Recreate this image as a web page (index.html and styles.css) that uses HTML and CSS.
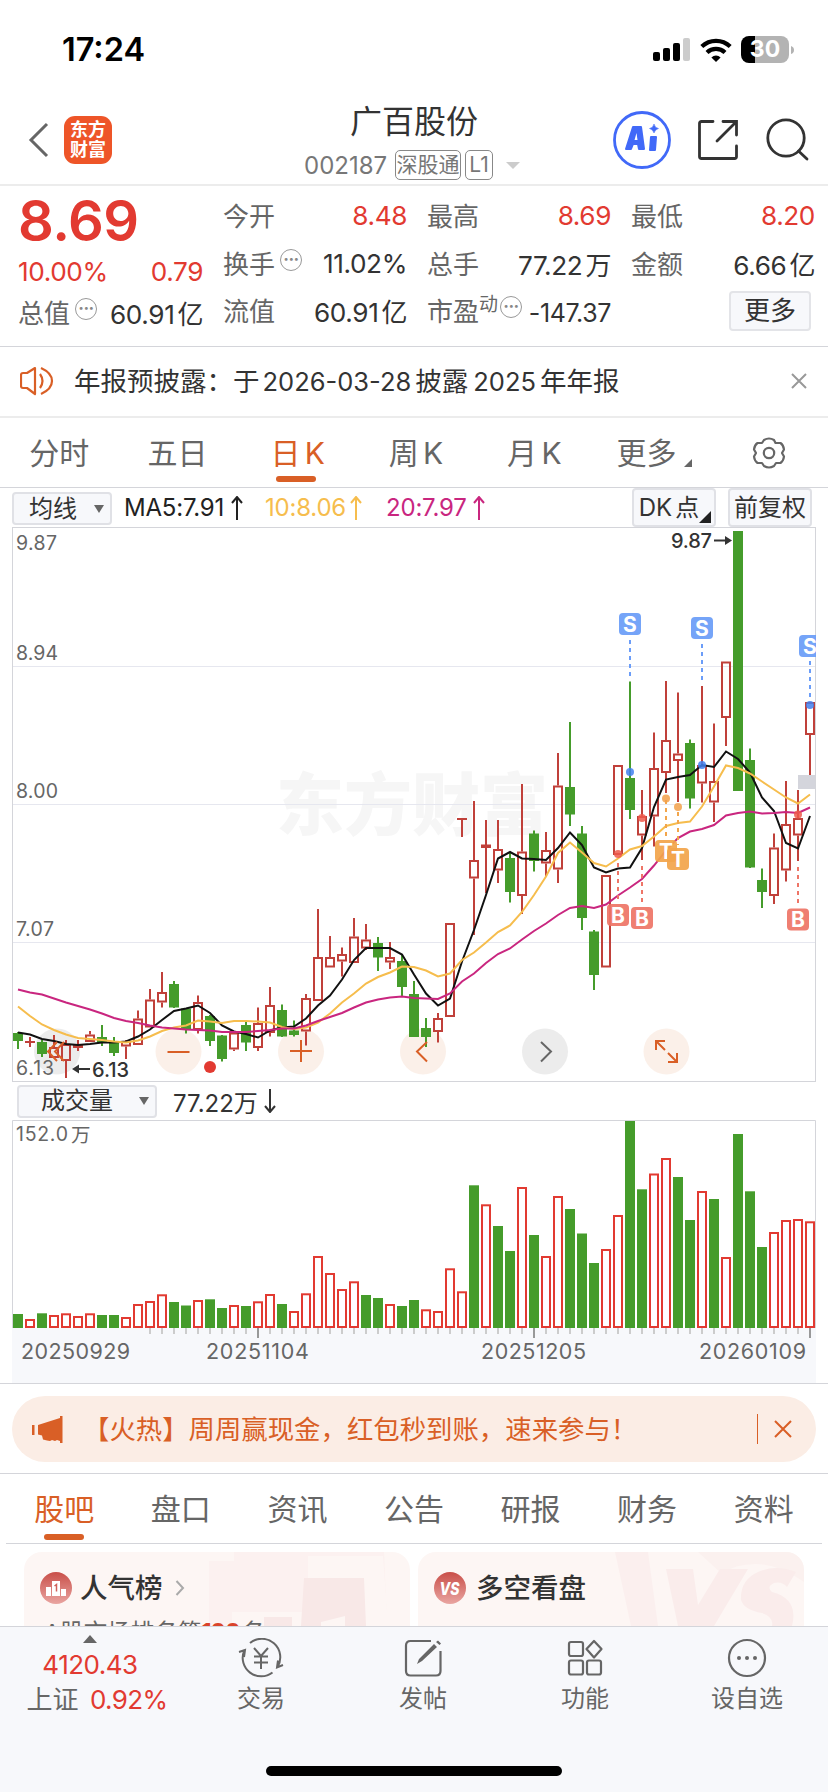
FILE: index.html
```
<!DOCTYPE html>
<html lang="zh-CN">
<head>
    <meta charset="UTF-8">
    <title>广百股份 002187</title>
    <link rel="stylesheet" href="styles.css">
</head>
<body>
    <!-- 状态栏 -->
    <div class="status">
        <span class="time">17:24</span>
        <div class="status-icons">
            <svg width="37" height="23" viewBox="0 0 37 23">
                <rect x="0" y="14" width="7" height="9" rx="2"/>
                <rect x="10" y="10" width="7" height="13" rx="2"/>
                <rect x="20" y="5" width="7" height="18" rx="2"/>
                <rect x="30" y="0" width="7" height="23" rx="2" fill="#ccc"/>
            </svg>
            <svg class="wifi" width="32" height="24" viewBox="0 0 32 24" fill="none" stroke="#000" stroke-width="4.2">
                <path d="M1.8 8.6a20.5 20.5 0 0 1 28.4 0"/>
                <path d="M7 14.4a13 13 0 0 1 18 0"/>
                <path d="M16 24l-4.6-4.6a6.8 6.8 0 0 1 9.2 0z" fill="#000" stroke="none"/>
            </svg>
            <div class="battery">30</div>
            <svg width="4" height="8" viewBox="0 0 4 8"><path d="M0 0q3 1 3 4t-3 4z" fill="#b3b3b3"/></svg>
        </div>
    </div>

    <!-- 标题 -->
    <header class="header">
        <svg class="back" width="22" height="36" viewBox="0 0 22 36"><path d="M19 2L3 18l16 16" fill="none" stroke="#666" stroke-width="3"/></svg>
        <div class="logo"><span>东方</span><span>财富</span></div>
        <div class="title">
            <div class="name">广百股份</div>
            <div class="code"><span class="num">002187</span><i class="tag">深股通</i><i class="tag tag-l1">L1</i><b class="tri"></b></div>
        </div>
        <div class="tools">
            <div class="ai">
                <svg width="58" height="58" viewBox="0 0 58 58">
                    <circle cx="29" cy="29" r="27.5" fill="none" stroke="#4169f8" stroke-width="2.8"/>
                    <g fill="#4169f8" stroke="#4169f8" stroke-linejoin="round">
                        <path d="M20 16h8l3 22h-5l-1-5h-5l-2 5h-5z" stroke-width="2"/>
                        <path d="M38 26h5l-1 13h-5z" stroke-width="2"/>
                        <path d="M41 13q1 4 4.500 4.500q-3.500 1-4.500 4.500q-1-3.500-4.500-4.500q3.500-.5 4.500-4.500z" stroke-width=".5"/>
                    </g>
                    <path d="M23.500 22l1 7h-3z" fill="#fff"/>
                </svg>
            </div>
            <svg class="share" width="42" height="42" viewBox="0 0 42 42" fill="none" stroke="#333" stroke-width="2.8" stroke-linecap="round">
                <path d="M16 2.500H4.500q-2 0-2 2V37.500q0 2 2 2H37.500q2 0 2-2V27M26 2.500H39.500V16M39 3L20 22"/>
            </svg>
            <svg class="search" width="44" height="44" viewBox="0 0 44 44" fill="none" stroke="#333" stroke-width="2.800" stroke-linecap="round">
                <circle cx="20" cy="20" r="18.200"/><path d="M32.500 33l8.500 8"/>
            </svg>
        </div>
    </header>

    <!-- 报价 -->
    <section class="quote">
        <div class="col first">
            <div class="price">8.69</div>
            <div class="row red"><span class="v">10.00%</span><span class="v">0.79</span></div>
            <div class="row"><span class="l">总值<i class="dots">···</i></span><span class="v">60.91<em>亿</em></span></div>
        </div>
        <div class="col">
            <div class="row"><span class="l">今开</span><span class="v red">8.48</span></div>
            <div class="row"><span class="l">换手<i class="dots">···</i></span><span class="v">11.02%</span></div>
            <div class="row"><span class="l">流值</span><span class="v">60.91<em>亿</em></span></div>
        </div>
        <div class="col">
            <div class="row"><span class="l">最高</span><span class="v red">8.69</span></div>
            <div class="row"><span class="l">总手</span><span class="v">77.22<em>万</em></span></div>
            <div class="row"><span class="l">市盈<sup>动</sup><i class="dots dots-s">···</i></span><span class="v v-s">-147.37</span></div>
        </div>
        <div class="col">
            <div class="row"><span class="l">最低</span><span class="v red">8.20</span></div>
            <div class="row"><span class="l">金额</span><span class="v">6.66<em>亿</em></span></div>
            <div class="row row-more"><span class="more">更多</span></div>
        </div>
    </section>

    <!-- 公告 -->
    <section class="notice">
        <svg width="34" height="30" viewBox="0 0 34 30" fill="none" stroke="#d95f26" stroke-width="2.200" stroke-linejoin="round">
            <path d="M15 2L7 7H3q-2 0-2 2v11q0 2 2 2h4l8 6zM20 8q5 7 0 14M21 2q11 5 11 13t-11 13"/>
        </svg>
        <p>年报预披露：于<span class="d1">2026-03-28</span>披露<span class="d2">2025</span>年年报</p>
        <svg class="x" width="16" height="16" viewBox="0 0 16 16"><path d="M1 1l14 14M15 1L1 15" stroke="#999" stroke-width="2"/></svg>
    </section>

    <!-- 周期 -->
    <nav class="tabs periods">
        <a>分时</a><a>五日</a><a class="on k">日 K</a><a class="k">周 K</a><a class="k">月 K</a><a class="sub">更多<b class="corner"></b></a>
        <a class="gear">
            <svg width="34" height="32" viewBox="0 0 34 32" fill="none" stroke="#666" stroke-width="2.200" stroke-linejoin="round">
                <path d="M12 3Q17 0 22 3L23.500 6Q26 6 28.500 6Q31.500 8 32 12.500L30 16L32 19.500Q31.500 24 28.500 26H24L22 29Q17 32 12 29L10 26H5.500Q2.500 24 2 19.500L4 16L2 12.500Q2.500 8 5.500 6H10Z"/>
                <circle cx="17" cy="16" r="5.200"/>
            </svg>
        </a>
    </nav>

    <!-- 均线 -->
    <div class="ma-bar">
        <div class="select">均线<b class="down"></b></div>
        <span class="ma ma5">MA5:7.91</span><svg class="ar" width="12" height="24" viewBox="0 0 12 24" stroke="#222"><path d="M6 24V2M1 7l5-6 5 6"/></svg>
        <span class="ma ma10">10:8.06</span><svg class="ar" width="12" height="24" viewBox="0 0 12 24" stroke="#f6bd4d"><path d="M6 24V2M1 7l5-6 5 6"/></svg>
        <span class="ma ma20">20:7.97</span><svg class="ar" width="12" height="24" viewBox="0 0 12 24" stroke="#c9267f"><path d="M6 24V2M1 7l5-6 5 6"/></svg>
        <div class="btns">
            <div class="btn dk">DK<em>点</em><b class="corner big"></b></div>
            <div class="btn">前复权</div>
        </div>
    </div>

    <!-- K线图 -->
    <svg class="kline" width="804" height="555" viewBox="12 527 804 555">
        <text class="mark" x="276" y="830" textLength="272">东方财富</text>
        <g class="grid"><path d="M12 666.500H816M12 804.500H816M12 942.500H816"/></g>
        <rect x="12.500" y="527.500" width="803" height="554" fill="none" stroke="#d4d5da"/>
        <!-- 按钮底色 -->
        <g class="ctl">
            <circle class="gray" cx="57" cy="1051.500" r="23"/>
            <circle cx="178.500" cy="1051.500" r="23"/>
            <circle cx="301" cy="1051.500" r="23"/>
            <circle cx="423" cy="1051.500" r="23"/>
            <circle class="gray" cx="545" cy="1051.500" r="23"/>
            <circle cx="666.500" cy="1051.500" r="23"/>
        </g>
        <g id="candles"></g>
        <rect x="798" y="775" width="17" height="14" fill="#d4d5dc"/>
        <g id="lines"></g>
        <g class="scale">
            <text x="16" y="550" textLength="41">9.87</text>
            <text x="16" y="660" textLength="42">8.94</text>
            <text x="16" y="798" textLength="42">8.00</text>
            <text x="16" y="936" textLength="38">7.07</text>
        </g>
        <g id="signals"></g>
        <g class="hl">
            <text x="671" y="548" textLength="41">9.87</text>
            <path d="M714 540.500h13" stroke="#333" stroke-width="2"/><path d="M725 536l7 4.500l-7 4.500z" fill="#333"/>
        </g>
        <circle cx="210" cy="1067" r="6" fill="#e23a31"/>
        <!-- 缩放按钮 -->
        <g class="ctl">
            <path d="M57 1042l-9 9.500l9 9.500M64 1042l-9 9.500l9 9.500M167.500 1052h22M290 1051h22M301 1040v22M427 1042l-10 9.500l10 10"/>
            <path d="M541 1042l10 9.500l-10 10" class="dark"/>
            <path d="M656 1050v-9h9M656 1041l9 9M668 1053l9 9M677 1053v9h-9"/>
        </g>
        <g class="scale"><text x="16" y="1075" textLength="38">6.13</text></g>
        <g class="hl">
            <path d="M76 1069h14" stroke="#333" stroke-width="2"/><path d="M79 1064.500l-7 4.500l7 4.500z" fill="#333"/>
            <text x="92" y="1077" textLength="37">6.13</text>
        </g>
    </svg>

    <!-- 成交量 -->
    <div class="vol-bar">
        <div class="select wide">成交量<b class="down"></b></div>
        <span class="vol-num">77.22<em>万</em></span>
        <svg class="ar" width="12" height="24" viewBox="0 0 12 24" stroke="#333"><path d="M6 0v22M1 17l5 6 5-6"/></svg>
    </div>
    <svg class="volume" width="804" height="263" viewBox="12 1120 804 263">
        <rect x="12" y="1328" width="804" height="55" fill="#f7f8fb"/>
        <path d="M12.500 1328V1120.500H815.500V1328" fill="none" stroke="#d4d5da"/>
        <g id="bars"></g>
        <g class="scale">
            <text x="16" y="1141" textLength="52">152.0</text><text x="71" y="1142">万</text>
        </g>
        <g class="dates">
            <text x="21" y="1359" textLength="109">20250929</text>
            <text x="206" y="1359" textLength="103">20251104</text>
            <text x="481" y="1359" textLength="105">20251205</text>
            <text x="699" y="1359" textLength="107">20260109</text>
        </g>
    </svg>

    <!-- 活动 -->
    <section class="promo">
        <div class="pill">
            <svg width="31" height="27" viewBox="0 0 31 27" fill="#d95f26">
                <rect x="0" y="9" width="2.500" height="10"/><path d="M6 9L28 2V0h2.500v27H28v-2l-3-1-2 1-3-1-2 1-3-.5-4-1-1-4-4-1z"/>
            </svg>
            <p>【火热】周周赢现金，红包秒到账，速来参与！</p>
            <i class="bar"></i>
            <svg width="18" height="18" viewBox="0 0 18 18"><path d="M1 1l16 16M17 1L1 17" stroke="#d95f26" stroke-width="2"/></svg>
        </div>
    </section>

    <nav class="tabs topics">
        <a class="on">股吧</a><a>盘口</a><a>资讯</a><a>公告</a><a>研报</a><a>财务</a><a>资料</a>
    </nav>

    <section class="cards">
        <div class="card">
            <svg class="art" width="386" height="90" viewBox="0 0 386 90">
                <path d="M185 9h25V0h150l3 74H185z" fill="#fbefed" opacity=".6"/>
                <path d="M208 60h76V4h75l5 70H208z" fill="#fdf6f4"/>
                <path d="M280 26h60l2 48h-21V64l-24 6v4h-20zM240 65h28v9h-28z" fill="#f8e8e7"/>
            </svg>
            <svg class="ic" width="32" height="32" viewBox="0 0 32 32">
                <defs><linearGradient id="g" x2="0" y2="1"><stop stop-color="#c94f49"/><stop offset="1" stop-color="#e9a5a1"/></linearGradient></defs>
                <circle cx="16" cy="16" r="16" fill="url(#g)"/>
                <path d="M6 15h5v9H6zM12 9h8v15h-8zM21 17h5v7h-5z" fill="#fff"/>
                <path d="M14.500 14l2-1.500v7" fill="none" stroke="#d0605a" stroke-width="1.500"/>
            </svg>
            <h3>人气榜</h3>
            <svg class="go" width="10" height="16" viewBox="0 0 10 16"><path d="M1.500 1l6.500 7-6.500 7" fill="none" stroke="#aaa" stroke-width="2"/></svg>
            <p class="rank">A股市场排名第<b>100</b>名</p>
        </div>
        <div class="card">
            <svg class="art" width="386" height="90" viewBox="0 0 386 90">
                <path d="M197 0h33l10 74h-27z" fill="#fbefee"/>
                <path d="M280 0h106v30q-26-18-48-18t-34 10z" fill="#fbf1ef"/>
                <path d="M248 17h27l5 36 22-36h28l-34 57h-36zM378 20q-20-8-38 0t-17 28q3 10 21 13 12 4 10 13h20q7-27-20-34-6-5 2-9 8-2 13 4z" fill="#faeceb"/>
            </svg>
            <svg class="ic" width="32" height="32" viewBox="0 0 32 32">
                <circle cx="16" cy="16" r="16" fill="url(#g)"/>
                <text x="5.500" y="22.500" class="vs" textLength="20" lengthAdjust="spacingAndGlyphs">VS</text>
            </svg>
            <h3>多空看盘</h3>
        </div>
    </section>

    <!-- 底部栏 -->
    <footer class="bottom">
        <div class="index">
            <b class="up"></b>
            <div class="idx">4120.43</div>
            <div class="idx2"><span>上证</span>0.92%</div>
        </div>
        <div class="item">
            <svg width="46" height="40" viewBox="0 0 46 40" fill="none" stroke="#666" stroke-width="2">
                <path d="M12 5A18.500 18.500 0 0 1 39.500 29M34.500 34.500A18.500 18.500 0 0 1 6 13M1 14l6-2-1 7M45 27l-6 2.500 1-7"/>
                <path d="M16 10l7 8 7-8M23 18v13M16 18.500h14M16 24.500h14"/>
            </svg>
            <span>交易</span>
        </div>
        <div class="item">
            <svg width="40" height="40" viewBox="0 0 40 40" fill="none" stroke="#666" stroke-width="2.200">
                <path d="M28 3H7.500Q3 3 3 7.500V33q0 4.500 4.500 4.500H33q4.500 0 4.500-4.500V13"/>
                <path d="M14 26l2-5L31 6l3 3L19 23zM33 4l2-1.500 3 3L36.500 7z" fill="#666" stroke="none"/>
            </svg>
            <span>发帖</span>
        </div>
        <div class="item">
            <svg width="36" height="40" viewBox="0 0 36 40" fill="none" stroke="#666" stroke-width="2.200">
                <rect x="2" y="4" width="14" height="14" rx="2"/><rect x="2" y="22.500" width="14" height="14" rx="2"/><rect x="20" y="22.500" width="14" height="14" rx="2"/>
                <path d="M27 3l7.500 8L27 19.500 19.500 11z" stroke-linejoin="round"/>
            </svg>
            <span>功能</span>
        </div>
        <div class="item">
            <svg width="40" height="40" viewBox="0 0 40 40">
                <circle cx="20" cy="20" r="18" fill="none" stroke="#666" stroke-width="2.200"/>
                <g fill="#666"><circle cx="12" cy="20" r="2"/><circle cx="20" cy="20" r="2"/><circle cx="28" cy="20" r="2"/></g>
            </svg>
            <span>设自选</span>
        </div>
        <i class="home"></i>
    </footer>
    <script src="chart.js"></script>
</body>
</html>
```
FILE: styles.css
```
body {
  margin: 0;
  width: 828px;
  height: 1792px;
  overflow: hidden;
  background: #fff;
  color: #333;
  font-family: Inter, "Noto Sans CJK SC", sans-serif;
  font-size: 26px;
}

* {
  box-sizing: border-box;
}

p, h3 {
  margin: 0;
}

i, em {
  font-style: normal;
}

svg {
  display: block;
  flex: none;
}

.red {
  color: #e23a31;
}

/* 状态栏 */
.status {
  height: 90px;
  padding: 9px 33px 0 62px;
  display: flex;
  justify-content: space-between;
  align-items: center;
}

.time {
  color: #000;
  font-size: 32.5px;
  font-weight: 600;
}

.status-icons {
  display: flex;
  align-items: center;
}

.wifi {
  margin: 0 9px 0 10px;
}

.battery {
  width: 48px;
  height: 27px;
  margin-right: 2px;
  border-radius: 8px;
  background: linear-gradient(90deg, #000 14px, #b3b3b3 14px);
  color: #fff;
  font-size: 23px;
  font-weight: 700;
  line-height: 27px;
  text-align: center;
}

/* 标题 */
.header {
  height: 96px;
  padding-left: 28px;
  border-bottom: 2px solid #ececec;
  display: flex;
  align-items: flex-start;
}

.back {
  margin-top: 32px;
}

.logo {
  width: 48px;
  height: 48px;
  margin: 26px 0 0 14px;
  border-radius: 11px;
  background: #ee5528;
  color: #fff;
  font-size: 18px;
  font-weight: 700;
  line-height: 20px;
  padding-top: 4px;
  display: flex;
  flex-direction: column;
  align-items: center;
}

.title {
  width: 400px;
  margin-left: 102px;
  text-align: center;
}

.name {
  margin-top: 10px;
  font-size: 32px;
  line-height: 44px;
}

.code {
  margin-top: 5px;
  height: 32px;
  color: #777;
  font-size: 24px;
  display: flex;
  align-items: center;
  padding-left: 90px;
}

.num {
  width: 91px;
  text-align: left;
}

.tag {
  height: 30px;
  width: 66px;
  border: 1.5px solid #888;
  border-radius: 5px;
  font-size: 21px;
  line-height: 27px;
  text-align: center;
  white-space: nowrap;
}

.tag-l1 {
  width: 28px;
  margin-left: 4px;
}

.tri {
  margin-left: 13px;
  border: 7px solid transparent;
  border-top-color: #ccc;
  border-bottom: 0;
}

.tools {
  display: flex;
  align-items: center;
  margin: 21px 0 0 -1px;
}

.share {
  margin-left: 26px;
}

.search {
  margin-left: 27px;
}

/* 报价 */
.quote {
  height: 161px;
  padding: 6px 13px 0 18px;
  border-bottom: 1px solid #d4d5da;
  display: grid;
  grid-template-columns: 185px 184px 184px 184px;
  column-gap: 20px;
}

.row {
  height: 47.5px;
  display: flex;
  justify-content: space-between;
  align-items: center;
  white-space: nowrap;
}

.price {
  height: 58px;
  color: #e23a31;
  font-size: 56px;
  font-weight: 600;
  line-height: 58px;
  letter-spacing: -0.5px;
}

.first .row {
  height: 43px;
}

.first .row + .row {
  height: 38px;
}

.l {
  color: #666;
  display: flex;
  margin-top: -2px;
}

.v {
  font-size: 26.2px;
  letter-spacing: -0.4px;
}

.v-s {
  font-size: 25px;
  padding-top: 4px;
}

.v em {
  margin-left: 3px;
  font-size: 26px;
}

.dots {
  width: 22px;
  height: 22px;
  margin: 5px 0 0 5px;
  border: 1.5px solid #999;
  border-radius: 50%;
  color: #888;
  font-size: 17px;
  font-weight: 700;
  line-height: 18px;
  text-align: center;
  letter-spacing: -0.5px;
}

.dots-s {
  margin-left: 2px;
}

.l sup {
  font-size: 19px;
  line-height: 20px;
  margin-top: 4px;
}

.row-more {
  justify-content: flex-end;
}

.more {
  width: 82px;
  height: 40px;
  margin: 0 4px 0 0;
  border: 2px solid #e3e4e8;
  border-radius: 4px;
  background: #f7f8fb;
  font-size: 26px;
  line-height: 35px;
  text-align: center;
}

/* 公告 */
.notice {
  height: 71px;
  padding: 0 21px 2px 20px;
  border-bottom: 2px solid #ececec;
  display: flex;
  align-items: center;
}

.notice p {
  margin: -3px 0 0 20px;
  font-size: 26.5px;
  white-space: nowrap;
}

.notice .d1 {
  margin: 0 4px 0 3px;
}

.notice .d2 {
  margin: 0 4px 0 5px;
}

.notice .d1, .notice .d2 {
  font-size: 25.5px;
}

.x {
  margin-left: auto;
}

/* 选项卡 */
.tabs {
  display: flex;
  border-bottom: 1px solid #d4d5da;
}

.tabs a {
  flex: none;
  width: calc(100% / 7);
  position: relative;
  display: flex;
  justify-content: center;
  align-items: center;
  padding-bottom: 4px;
  color: #666;
  font-size: 30px;
  white-space: nowrap;
}

.tabs .k {
  padding-left: 4px;
  word-spacing: -4px;
}

.tabs .gear {
  padding-bottom: 0;
}

.tabs .on {
  color: #d95f26;
}

.tabs .on::after {
  content: "";
  position: absolute;
  bottom: 5px;
  left: calc(50% - 20px);
  width: 40px;
  height: 6px;
  border-radius: 3px;
  background: #d95f26;
}

.periods {
  height: 70px;
}

.corner {
  position: absolute;
  right: 18px;
  bottom: 20px;
  border-left: 8px solid transparent;
  border-bottom: 8px solid #666;
}

.tabs .sub {
  padding-right: 8px;
}

.topics {
  height: 70px;
  margin: 0 6px;
}

.topics .on::after {
  bottom: 3px;
}

/* 均线 */
.ma-bar {
  height: 39px;
  padding: 0 16px 0 12px;
  display: flex;
  align-items: flex-end;
}

.select {
  width: 100px;
  height: 33px;
  flex: none;
  margin-bottom: 2px;
  padding: 0 6px 0 15px;
  border: 2px solid #e0e1e6;
  border-radius: 4px;
  background: #f7f8fb;
  font-size: 24px;
  line-height: 28px;
  display: flex;
  justify-content: space-between;
  align-items: center;
  white-space: nowrap;
}

.wide {
  width: 140px;
  margin: 0;
  padding-left: 22px;
}

.down {
  border: 5px solid transparent;
  border-top: 8px solid #666;
  border-bottom: 0;
}

.ma {
  align-self: center;
  flex: none;
  font-size: 24px;
  letter-spacing: -0.2px;
  white-space: nowrap;
}

.ma5 {
  width: 107px;
  margin-left: 12px;
  color: #222;
}

.ma10 {
  width: 85px;
  margin-left: 22px;
  color: #f6bd4d;
}

.ma20 {
  width: 87px;
  margin-left: 24px;
  color: #c9267f;
}

.ar {
  align-self: center;
  fill: none;
  stroke-width: 2;
}

.btns {
  margin-left: auto;
  display: flex;
  gap: 12px;
}

.btn {
  position: relative;
  width: 84px;
  height: 39px;
  border: 2px solid #e0e1e6;
  border-radius: 4px;
  background: #f7f8fb;
  font-size: 24px;
  line-height: 35px;
  text-align: center;
  white-space: nowrap;
}

.dk {
  padding-right: 10px;
}

.dk em {
  margin-left: 3px;
}

.big {
  right: 3px;
  bottom: 2px;
  border-left-width: 12px;
  border-bottom: 12px solid #222;
}

/* K线图 */
.kline, .volume {
  margin-left: 12px;
}

.mark {
  font-size: 68px;
  font-weight: 900;
  fill: #f6f6f6;
}

.grid {
  stroke: #e6e7ef;
}

.scale {
  font-size: 19.5px;
  fill: #666;
}

.hl text {
  font-size: 20px;
  font-weight: 500;
  fill: #333;
}

.dates {
  font-size: 21.5px;
  fill: #666;
}

.ctl circle {
  fill: rgba(245, 215, 197, 0.38);
}

.ctl .gray {
  fill: rgba(200, 200, 200, 0.35);
}

.ctl path {
  fill: none;
  stroke: #d95f26;
  stroke-width: 2;
}

.ctl .dark {
  stroke: #666;
}

.sig {
  font-size: 21px;
  font-weight: 700;
  fill: #fff;
  text-anchor: middle;
}

/* 成交量 */
.vol-bar {
  height: 38px;
  padding: 0 17px;
  display: flex;
  align-items: center;
}

.vol-num {
  width: 90px;
  margin-left: 16px;
  font-size: 24px;
  white-space: nowrap;
}

.vol-num + .ar {
  margin-left: 1px;
}

/* 活动 */
.promo {
  height: 91px;
  padding: 12px 12px 0;
  border-top: 1px solid #d4d5da;
  border-bottom: 1px solid #d4d5da;
}

.pill {
  height: 66px;
  padding: 0 24px 0 20px;
  border-radius: 33px;
  background: #fbede5;
  color: #d95f26;
  display: flex;
  align-items: center;
}

.pill p {
  margin: -4px 0 0 20px;
  font-size: 26.4px;
  white-space: nowrap;
}

.bar {
  width: 1.5px;
  height: 30px;
  margin: 0 16px 0 auto;
  background: #d95f26;
}

/* 卡片 */
.cards {
  height: 82px;
  padding: 8px 24px 0;
  display: flex;
  gap: 8px;
  overflow: hidden;
}

.card {
  position: relative;
  width: 386px;
  height: 120px;
  padding: 20px 0 0 16px;
  border-radius: 18px;
  background: #fdf6f4;
  overflow: hidden;
  display: flex;
  flex-wrap: wrap;
  align-content: flex-start;
}

.art {
  position: absolute;
  left: 0;
  top: 0;
}

.ic {
  position: relative;
}

.card h3 {
  position: relative;
  margin-left: 8px;
  font-size: 27.5px;
  font-weight: 500;
  line-height: 32px;
}

.card + .card h3 {
  margin-left: 10px;
}

.go {
  margin: 8px 100px 0 12px;
}

.rank {
  position: relative;
  width: 340px;
  margin: 14px 0 0 4px;
  font-size: 23.5px;
  line-height: 30px;
  color: #666;
}

.rank b {
  margin-right: 2px;
  font-size: 24px;
  letter-spacing: -1.5px;
  color: #d9442a;
}

.vs {
  font-size: 17px;
  font-weight: 800;
  font-style: italic;
  fill: #fff;
}

/* 底部栏 */
.bottom {
  position: relative;
  height: 166px;
  border-top: 1px solid #d4d5da;
  background: #f7f8fb;
  color: #666;
  display: flex;
}

.index {
  width: 180px;
  padding-top: 8px;
  color: #e23a31;
  display: flex;
  flex-direction: column;
  align-items: center;
}

.up {
  border: 7px solid transparent;
  border-bottom: 8px solid #666;
  border-top: 0;
}

.idx {
  margin-top: 6px;
  font-size: 26px;
  line-height: 32px;
  letter-spacing: -0.5px;
}

.idx2 {
  width: 141px;
  font-size: 26px;
  line-height: 38px;
  letter-spacing: -0.6px;
  display: flex;
  justify-content: space-between;
  margin: 0 0 0 14px;
}

.idx2 span {
  color: #666;
  font-size: 26px;
  letter-spacing: 0;
}

.item {
  width: 162px;
  padding-top: 11px;
  font-size: 24px;
  line-height: 36px;
  display: flex;
  flex-direction: column;
  align-items: center;
}

.item span {
  margin-top: 3px;
}

.home {
  position: absolute;
  left: 266px;
  bottom: 16px;
  width: 296px;
  height: 10px;
  border-radius: 5px;
  background: #000;
}
```
FILE: chart.js
```
// [颜色, 最高, 实体上, 实体下, 最低]
const candles = [
  ['g',1032,1033,1041,1049],['r',1037,1041,1043,1047],['g',1040,1042,1054,1057],['r',1035,1047,1058,1058],
  ['r',1040,1044,1061,1078],['r',1040,1045,1048,1051],['r',1031,1034.5,1042,1042],['g',1025,1037,1043,1046],
  ['g',1037,1042.5,1053,1056],['r',1040,1041,1046.5,1059],['r',1010.5,1018.5,1045,1045],['r',989,999.5,1027.5,1027.5],
  ['r',972,992,1002.5,1007.5],['g',981,984,1007.5,1008],['g',1008,1008.5,1030,1033.5],['r',995.5,1002,1030,1033.5],
  ['g',1015,1016,1041,1046],['g',1035,1035.5,1059,1061.5],['r',1032,1032.5,1049.5,1051],['g',1022,1025,1042.5,1051],
  ['r',1007.5,1023,1048,1051],['r',987,1005,1033,1036.5],['g',1004.5,1010,1036.5,1037],['g',1020.5,1030.5,1035,1036.5],
  ['r',994,998,1031.5,1045.5],['r',909,957,1001,1001],['r',936,957,967.5,967.5],['r',947.5,954,961.5,976.5],
  ['r',918,936.5,963,963],['r',924,939.5,948.5,950],['g',937,943,957.5,971],['r',942,957,962.5,969],
  ['g',955,961,987,996],['g',981,994,1037,1037],['g',1018,1028,1037,1047],['r',1013,1018,1032,1042.5],
  ['r',923,923,1017,1017],['r',818,818,820,837],['r',801,860,878.5,935],['r',820,844.5,848,893],
  ['r',820,849,870.5,883],['g',853,858,892,902.5],['r',784,851.5,896,914],['g',830.5,833.5,861,871.5],
  ['r',832,850,863.5,876.5],['r',753,785.5,869.5,883],['g',722,787,814.5,826],['g',826,833.5,918,930],
  ['g',930,931.5,975,990],['r',875,875,967.5,967.5],['r',765,765,855,855],['g',681.5,778,810,819],
  ['r',790,816,835.5,860],['r',732.5,768,816.5,846.5],['r',681,740,773,793],['r',692.5,753.5,761,802],
  ['g',739.5,743,798.5,808.5],['r',686,765,783.5,802.5],['r',723.5,781,802.5,822],['r',661.5,661.5,718,746],
  ['g',531,531,791,791],['g',748.5,760,867.5,868],['g',868.5,880,892,908],['r',833.5,847.5,896,904],
  ['r',781,824,870.5,881.5],['r',790,818,835.5,861],['r',702,702,735,776]
];

const ma5 = [1032.5,1034.5,1039,1041,1044,1045,1044,1042.5,1042.5,1041.5,1036.5,1029.5,1020,1011,1008.5,1005.5,1013,1025.5,1031.5,1034,1037.5,1030.5,1027.5,1026.5,1018.5,1005.5,995.5,979.5,960,948,948,948,954.5,974.5,993.5,1005.5,998.5,961.5,930,895,858.5,852,858.5,859,860,848,832.5,845,867.5,872.5,868.5,867.5,848,807,779.5,777,775,765,767,751.5,759,772.5,797.5,811,843,848.5,816];
const ma10 = [1006.5,1016,1024.5,1030,1034.5,1038,1039,1040,1041.5,1042.5,1040.5,1036.5,1031,1027.5,1025.5,1020.5,1021.5,1023,1021,1021,1021.5,1022.5,1027,1029,1027.5,1022.5,1013.5,1002.5,993.5,983.5,977,972.5,966.5,967,970.5,976.5,973.5,960,952.5,942.5,932,925.5,912,895,876.5,853,842.5,852.5,863,866.5,858.5,849.5,846,836.5,826,823,821.5,806.5,786.5,765.5,768,773.5,781.5,789.5,797.5,803.5,794.5];
const ma20 = [989.5,992.5,994.5,998.5,1002.5,1006,1009.5,1013.5,1018,1021,1023,1025.5,1027.5,1028.5,1029.5,1030,1030.5,1032,1032,1032,1031,1030,1028.5,1028.5,1025.5,1021,1017,1013,1007.5,1002.5,999.5,997.5,996.5,998,998.5,999,993.5,981.5,973.5,963,954,948.5,939.5,931,923.5,915,908,906,908,904.5,895.5,887.5,879,865.5,850.5,838,831.5,829,825,815.5,813,811.5,813.5,813,812,813,807.5];

// 成交量: 高度
const volume = 'g14 r9 g14.7 r13 r14.7 r12 r14.7 g13 g13 r11 r24 r27 r33.7 g26 g22.500 r28 g28.700 g20 r23 g22 r26.700 r34 g24 r17 r34.700 r72 r55 r39 r46.700 g33 g30 r24 g22 g28 r18.700 r17 r59.700 r36.700 g142.700 r123.700 g102 g77 r141 g93 r72 r132 g119 g94.500 g65 r79 r113 g207 g138.700 r154.500 r170 g151 g108 r137 g129 r71 g194 g136.700 g81 r96 r108 r109 r106.700'.split(' ');

const x = i => 18 + i * 12;

document.getElementById('candles').innerHTML = candles.map(([c, hi, top, bot, lo], i) => {
  const color = c === 'g' ? '#459c2b' : '#c0403a';
  if (c === 'g' || bot - top < 5) {
    return `<path d="M${x(i)} ${hi}V${lo}" stroke="${color}" stroke-width="2"/><rect x="${x(i) - 5}" y="${top}" width="10" height="${bot - top}" fill="${color}"/>`;
  }
  return `<path d="M${x(i)} ${hi}V${top}M${x(i)} ${bot}V${lo}" stroke="${color}" stroke-width="2"/><rect x="${x(i) - 4}" y="${top + 1}" width="8" height="${bot - top - 2}" fill="none" stroke="${color}" stroke-width="2"/>`;
}).join('');

const line = (data, color) => `<polyline points="${data.map((y, i) => x(i) + ',' + y).join(' ')}" fill="none" stroke="${color}" stroke-width="2"/>`;
document.getElementById('lines').innerHTML = line(ma5, '#111') + line(ma10, '#f6bd4d') + line(ma20, '#c9267f');

// 买卖点: [字母, x, 标签y, 圆点y, 虚线起, 虚线止]
const signals = [
  ['S',630,624,772,640,676],['S',702,628,765,644,681],['S',810,646,705,661,699],
  ['B',618,915,854,863,900],['B',642,918,818,866,903],['B',798,919.5,814.5,867,904],
  ['T',666,851,798.5,800,836],['T',678,859,807,812,845]
];
const fills = { S: '#6b9df8', B: '#ee7567', T: '#f2a54b' };
const dotFills = { S: '#4280ee', B: '#ef5b4c', T: '#f2a04a' };
document.getElementById('signals').innerHTML = signals.map(([t, cx, y, dot, a, b]) => `
  <path d="M${cx} ${a}V${b}" stroke="${fills[t]}" stroke-width="2" stroke-dasharray="4 4"/>
  <circle cx="${cx}" cy="${dot}" r="4" fill="${dotFills[t]}" opacity=".85"/>
  <rect x="${cx - 11}" y="${y - 11}" width="22" height="22" rx="4" fill="${fills[t]}" opacity=".93"/>
  <text class="sig" x="${cx}" y="${y + 7.5}">${t}</text>`).join('');

document.getElementById('bars').innerHTML = volume.map((v, i) => {
  const h = +v.slice(1);
  const long = i === 20 || i === 43 || i === 66;
  const tick = i > 10 ? `<path d="M${x(i)} 1328v${long ? 10 : 6}" stroke="${long ? '#999' : '#ccc'}" stroke-width="2"/>` : '';
  return tick + (v[0] === 'g'
    ? `<rect x="${x(i) - 5}" y="${1328 - h}" width="10" height="${h}" fill="#459c2b"/>`
    : `<rect x="${x(i) - 4}" y="${1329 - h}" width="8" height="${h - 2}" fill="#fff" stroke="#e23a31" stroke-width="2"/>`);
}).join('');
```
